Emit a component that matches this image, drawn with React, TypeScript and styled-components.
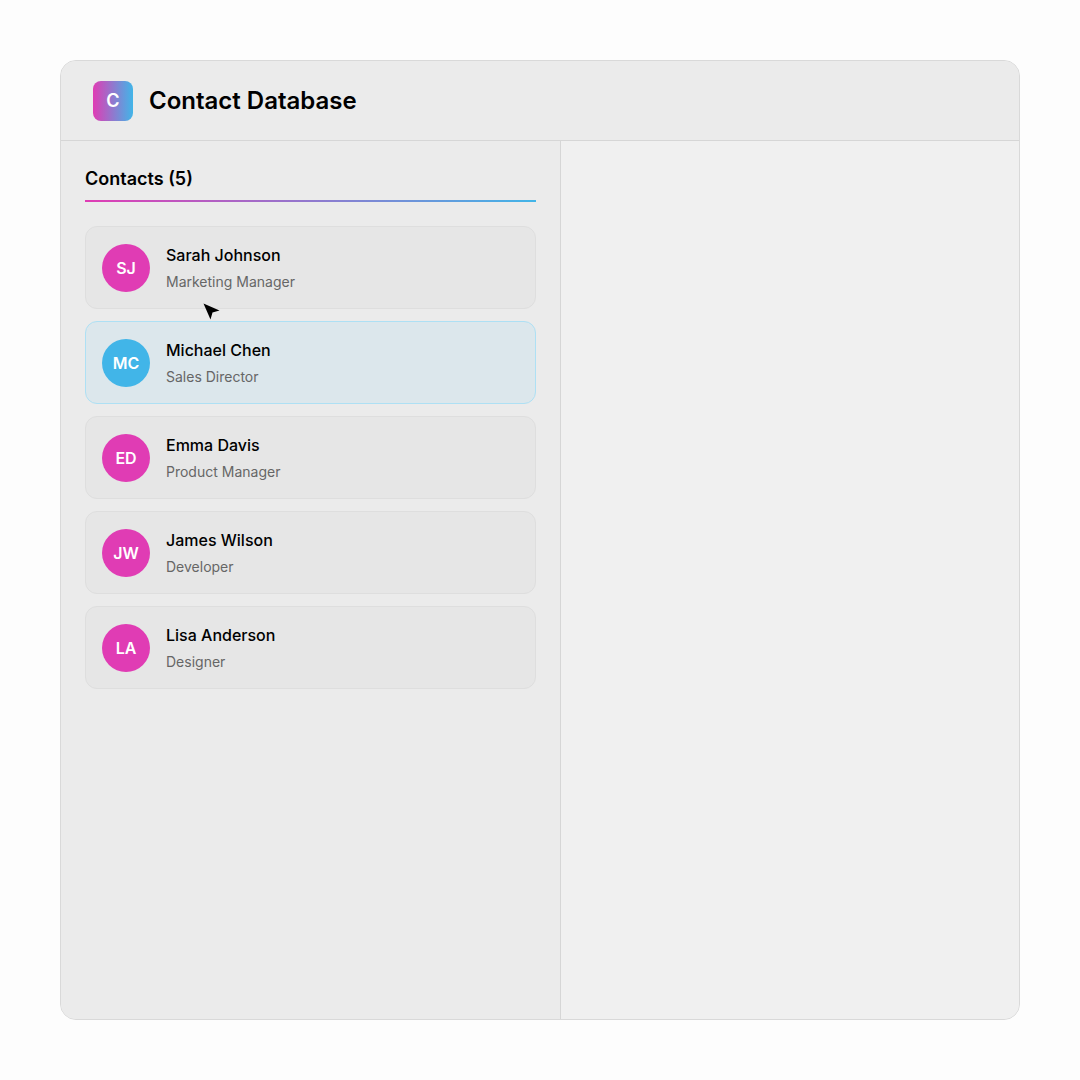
import React from "react";
import styled, { createGlobalStyle } from "styled-components";

const PINK = "#e03cb4";
const BLUE = "#41b5e8";

const GlobalStyle = createGlobalStyle`
	html, body {
		margin: 0;
		padding: 0;
		background: #fdfdfd;
		font-family: Inter, "Liberation Sans", sans-serif;
	}
`;

const Page = styled.div`
	position: relative;
	box-sizing: border-box;
	width: 1080px;
	height: 1080px;
	padding: 60px;
`;

const Frame = styled.div`
	box-sizing: border-box;
	display: flex;
	flex-direction: column;
	height: 960px;
	background: #f0f0f0;
	border: 1px solid #d9d9d9;
	border-radius: 16px;
	overflow: hidden;
`;

const Header = styled.header`
	box-sizing: border-box;
	display: flex;
	align-items: center;
	gap: 16px;
	height: 80px;
	padding: 0 32px;
	background: #ebebeb;
	border-bottom: 1px solid #d6d6d6;
`;

const Logo = styled.div`
	display: flex;
	align-items: center;
	justify-content: center;
	width: 40px;
	height: 40px;
	border-radius: 8px;
	background: linear-gradient(90deg, ${PINK}, ${BLUE});
	color: #fff;
	font-size: 18px;
	font-weight: 600;
`;

const Title = styled.h1`
	margin: 0;
	font-size: 24px;
	font-weight: 600;
	color: #000;
`;

const Body = styled.div`
	display: flex;
	flex: 1;
	min-height: 0;
`;

const Sidebar = styled.aside`
	box-sizing: border-box;
	width: 500px;
	padding: 24px;
	background: #ebebeb;
	border-right: 1px solid #d6d6d6;
`;

const SectionTitle = styled.h2`
	margin: 0 0 24px;
	padding-bottom: 8px;
	font-size: 18px;
	line-height: 27px;
	font-weight: 600;
	color: #000;
	border-bottom: 2px solid transparent;
	border-image: linear-gradient(90deg, ${PINK}, ${BLUE}) 1;
`;

const List = styled.div`
	display: flex;
	flex-direction: column;
	gap: 12px;
`;

const Card = styled.div<{ $active?: boolean }>`
	box-sizing: border-box;
	display: flex;
	align-items: center;
	gap: 16px;
	height: 83px;
	padding: 0 16px;
	border-radius: 12px;
	background: ${(p) => (p.$active ? "#dce7ec" : "#e6e6e6")};
	border: 1px solid ${(p) => (p.$active ? "#aee0f4" : "#dedede")};
`;

const Avatar = styled.div<{ $active?: boolean }>`
	display: flex;
	align-items: center;
	justify-content: center;
	flex-shrink: 0;
	width: 48px;
	height: 48px;
	border-radius: 50%;
	background: ${(p) => (p.$active ? BLUE : PINK)};
	color: #fff;
	font-size: 16px;
	font-weight: 600;
`;

const Info = styled.div`
	display: flex;
	flex-direction: column;
	gap: 4px;
`;

const Name = styled.div`
	font-size: 16px;
	line-height: 24px;
	font-weight: 500;
	color: #000;
`;

const Role = styled.div`
	font-size: 14px;
	line-height: 21px;
	color: #666;
`;

const Detail = styled.main`
	flex: 1;
	background: #f0f0f0;
`;

const Cursor = styled.svg`
	position: absolute;
	left: 203px;
	top: 303px;
	width: 17px;
	height: 17px;
`;

const contacts = [
	{ initials: "SJ", name: "Sarah Johnson", role: "Marketing Manager" },
	{ initials: "MC", name: "Michael Chen", role: "Sales Director", active: true },
	{ initials: "ED", name: "Emma Davis", role: "Product Manager" },
	{ initials: "JW", name: "James Wilson", role: "Developer" },
	{ initials: "LA", name: "Lisa Anderson", role: "Designer" },
];

const App = () => {
	return (
		<Page>
			<GlobalStyle />
			<Frame>
				<Header>
					<Logo>C</Logo>
					<Title>Contact Database</Title>
				</Header>
				<Body>
					<Sidebar>
						<SectionTitle>Contacts (5)</SectionTitle>
						<List>
							{contacts.map((c) => (
								<Card key={c.initials} $active={c.active}>
									<Avatar $active={c.active}>{c.initials}</Avatar>
									<Info>
										<Name>{c.name}</Name>
										<Role>{c.role}</Role>
									</Info>
								</Card>
							))}
						</List>
					</Sidebar>
					<Detail />
				</Body>
			</Frame>
			<Cursor viewBox="0 0 17 17">
				<path d="M0.5 0.5 L16.5 7.5 L9.5 9.5 L7.5 16.5 Z" fill="#000" />
			</Cursor>
		</Page>
	);
};

export default App;
